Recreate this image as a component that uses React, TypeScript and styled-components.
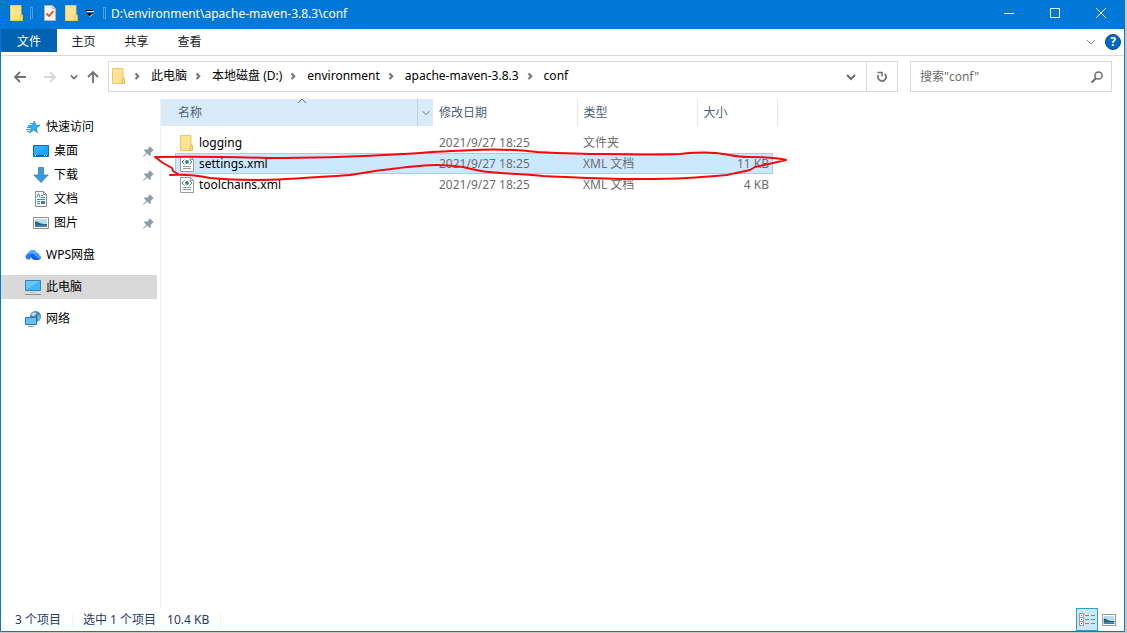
import React from 'react';
import styled, { createGlobalStyle, css } from 'styled-components';

const GlobalStyle = createGlobalStyle`
  *, *::before, *::after { box-sizing: border-box; }
  body { margin: 0; background: #c8c8c8; }
  body, button, input, table {
    font-family: "Noto Sans", "Noto Sans CJK SC", sans-serif;
    font-size: 12px;
    line-height: 20px;
  }
  button { margin: 0; padding: 0; border: 0; background: none; color: inherit; }
  svg { display: block; flex: none; }
`;

const Desktop = styled.div`
  display: flex;
  min-height: 100vh;
  padding: 0 2px 1px 0;
`;

const Window = styled.main`
  flex: 1;
  display: flex;
  flex-direction: column;
  background: #fff;
  border: 1px solid #0078d7;
  border-top: 0;
  color: #000;
`;

const TitleBar = styled.header`
  display: flex;
  align-items: center;
  height: 29px;
  padding: 0 0 3px 8px;
  background: #0078d7;
  color: #fff;
`;

const Separator = styled.span`
  width: 3px;
  height: 12px;
  margin: 0 5px;
  border: 1px solid #4d9fe2;
`;

const QuickButton = styled.button<{ $width: number }>`
  display: flex;
  align-items: center;
  justify-content: center;
  width: ${p => p.$width}px;
  height: 20px;
`;

const Title = styled.h1`
  flex: 1;
  margin: 0;
  padding-top: 2px;
  font-size: 12px;
  font-weight: 400;
`;

const CaptionButton = styled.button`
  display: flex;
  align-items: center;
  justify-content: center;
  width: 46px;
  height: 26px;
`;

const Ribbon = styled.nav`
  display: flex;
  align-items: flex-start;
  height: 27px;
  border-bottom: 1px solid #dadbdc;
`;

const RibbonTab = styled.button<{ $primary?: boolean }>`
  width: ${p => (p.$primary ? 56 : 53)}px;
  height: 23px;
  padding-top: 2px;
  color: #222;
  ${p => p.$primary && css`
    background: #0063b1;
    color: #fff;
  `}
`;

const RibbonEnd = styled.div`
  display: flex;
  align-items: center;
  gap: 9px;
  height: 26px;
  margin-left: auto;
  padding-right: 3px;
`;

const HelpButton = styled.button`
  width: 16px;
  height: 16px;
  border-radius: 50%;
  border: 1px solid #0a4a8c;
  background: #0067c5;
  color: #fff;
  font-weight: 700;
  line-height: 14px;
`;

const NavRow = styled.div`
  display: flex;
  align-items: center;
  height: 43px;
  padding: 0 12px 2px 9px;
`;

const NavButton = styled.button<{ $width: number }>`
  display: flex;
  align-items: center;
  justify-content: center;
  width: ${p => p.$width}px;
  height: 24px;
`;

const AddressBox = styled.div`
  flex: 1;
  display: flex;
  align-items: stretch;
  height: 31px;
  border: 1px solid #d9d9d9;
`;

const Path = styled.ol`
  flex: 1;
  display: flex;
  align-items: center;
  margin: 0;
  padding: 0 0 2px 3px;
  list-style: none;
`;

const Crumb = styled.li`
  display: flex;
  align-items: center;
  white-space: nowrap;
`;

const CrumbArrow = styled.span`
  display: flex;
  justify-content: center;
  width: 25px;
  padding-right: 3px;
`;

const AddressButton = styled.button<{ $divided?: boolean }>`
  display: flex;
  align-items: center;
  justify-content: center;
  width: 31px;
  ${p => p.$divided && css`border-left: 1px solid #d9d9d9;`}
`;

const SearchBox = styled.label`
  display: flex;
  align-items: center;
  width: 202px;
  height: 31px;
  margin-left: 12px;
  padding: 0 7px 0 9px;
  border: 1px solid #d9d9d9;
`;

const SearchInput = styled.input`
  flex: 1;
  min-width: 0;
  padding: 0;
  border: 0;
  outline: 0;
  background: none;
  &::placeholder { color: #6d6d6d; opacity: 1; }
`;

const Body = styled.div`
  flex: 1;
  display: flex;
`;

const Sidebar = styled.aside`
  display: flex;
  flex-direction: column;
  gap: 8px;
  width: 160px;
  padding: 16px 3px 0 0;
  border-right: 1px solid #f0f0f0;
`;

const TreeGroup = styled.ul`
  margin: 0;
  padding: 0;
  list-style: none;
`;

const TreeItem = styled.li<{ $active?: boolean }>`
  background: ${p => (p.$active ? '#d9d9d9' : 'transparent')};
`;

const TreeLink = styled.a<{ $nested?: boolean }>`
  display: flex;
  align-items: center;
  gap: 5px;
  height: 24px;
  padding-left: ${p => (p.$nested ? 32 : 24)}px;
  padding-right: 3px;
  color: #000;
  text-decoration: none;
`;

const TreeLabel = styled.span`
  flex: 1;
`;

const Files = styled.section`
  position: relative;
  flex: 1;
`;

const Table = styled.table`
  width: 616px;
  table-layout: fixed;
  border-collapse: collapse;
  tbody::before {
    content: '';
    display: block;
    height: 6px;
  }
`;

const HeadCell = styled.th<{ $sorted?: boolean }>`
  position: relative;
  height: 27px;
  padding: 0;
  border-right: ${p => (p.$sorted ? 0 : '1px solid #e5e5e5')};
  background: ${p => (p.$sorted ? '#d9ebf9' : '#fff')};
  color: #4c607a;
  font-weight: 400;
`;

const HeadContent = styled.div`
  display: flex;
  height: 27px;
`;

const SortButton = styled.button<{ $indent: number }>`
  flex: 1;
  padding-left: ${p => p.$indent}px;
  text-align: left;
`;

const HeadMenuButton = styled.button`
  display: flex;
  align-items: center;
  justify-content: center;
  width: 16px;
  border-left: 1px solid #b5d3ea;
`;

const SortMark = styled.span`
  position: absolute;
  top: -2px;
  left: 136px;
`;

const FileCell = styled.td<{ $end?: boolean }>`
  height: 21px;
  padding: 0;
  color: #6d6d6d;
  text-align: ${p => (p.$end ? 'right' : 'left')};
`;

type CellPart = 'first' | 'middle' | 'last';

const CellContent = styled.div<{ $part: CellPart; $selected?: boolean }>`
  display: flex;
  align-items: center;
  gap: 5px;
  height: 21px;
  padding-left: 6px;
  border: 1px solid transparent;
  border-width: 1px 0;
  ${p => p.$part === 'first' && css`
    margin-left: 14px;
    padding-left: 4px;
    border-left-width: 1px;
    color: #000;
  `}
  ${p => p.$part === 'last' && css`
    justify-content: flex-end;
    margin-right: 4px;
    padding-right: 3px;
    border-right-width: 1px;
  `}
  ${p => p.$selected && css`
    background: #cce8ff;
    border-color: #99d1ff;
  `}
`;

const Markup = styled.svg`
  position: absolute;
  top: 0;
  left: -11px;
  pointer-events: none;
`;

const StatusBar = styled.footer`
  display: flex;
  align-items: center;
  height: 23px;
  padding-left: 14px;
  color: #1e3c64;
`;

const StatusText = styled.span<{ $divided?: boolean }>`
  padding-right: 11px;
  margin-right: ${p => (p.$divided ? 10 : 0)}px;
  border-right: ${p => (p.$divided ? '1px solid #f2f2f2' : 0)};
  line-height: 12px;
`;

const Views = styled.div`
  display: flex;
  margin-left: auto;
  padding-right: 4px;
`;

const ViewButton = styled.button<{ $on?: boolean }>`
  display: flex;
  align-items: center;
  justify-content: center;
  width: 22px;
  height: 23px;
  ${p => p.$on && css`
    border: 1px solid #26a0da;
    background: #cbe8f6;
  `}
`;

const FolderIcon = () => (
  <svg width="14" height="16" viewBox="0 0 14 16">
    <path d="M.5.500h10.500v9l1.500.8v5.200H.5z" fill="#ffe391" stroke="#ecc962" />
    <path d="M10 15.500v-4l1-1.500 1.500.5v5z" fill="#fcd877" stroke="#e6bf50" />
  </svg>
);

const CheckDocIcon = () => (
  <svg width="12" height="16" viewBox="0 0 12 16">
    <path d="M.5.5h8l3 3v12H.5z" fill="#f6f6f6" stroke="#b9b0aa" />
    <path d="M8.500.5v3h3" fill="none" stroke="#b9b0aa" />
    <path d="M2.500 8.500l2.500 2.500 4.500-5" fill="none" stroke="#e2521b" strokeWidth="1.800" />
  </svg>
);

const CustomizeIcon = () => (
  <svg width="8" height="7" viewBox="0 0 8 7">
    <path d="M0 0h7v1H0z" fill="#000" />
    <path d="M1 1h7v1H1z" fill="#fff" />
    <path d="M1 4h6L4 7z" fill="#fff" />
    <path d="M0 3h7L3.500 6.500z" fill="#000" />
  </svg>
);

type ChevronProps = { dir: 'down' | 'right' | 'up'; size?: number; color?: string; weight?: number };

const Chevron = ({ dir, size = 10, color = '#707070', weight = 1 }: ChevronProps) => {
  const paths = { down: 'M1 3l4 4 4-4', right: 'M3.500 2.500l2.800 2.800-2.800 2.800', up: 'M1 6l4-4 4 4' };
  return (
    <svg width={size} height={size} viewBox="0 0 10 10">
      <path d={paths[dir]} fill="none" stroke={color} strokeWidth={weight} />
    </svg>
  );
};

const Arrow = ({ dir, color }: { dir: 'left' | 'right' | 'up'; color: string }) => {
  const paths = {
    left: 'M13 7H2M7 2L2 7l5 5',
    right: 'M1 7h11M7 2l5 5-5 5',
    up: 'M7 13V2M2 7l5-5 5 5',
  };
  return (
    <svg width="14" height="14" viewBox="0 0 14 14">
      <path d={paths[dir]} fill="none" stroke={color} strokeWidth="1.800" />
    </svg>
  );
};

const RefreshIcon = () => (
  <svg width="12" height="12" viewBox="0 0 12 12">
    <path d="M8.500 2.800a4 4 0 1 1-6 1.200" fill="none" stroke="#707070" strokeWidth="1.700" />
    <path d="M1.500 1.500H6v4" fill="none" stroke="#707070" strokeWidth="1.600" />
  </svg>
);

const SearchIcon = () => (
  <svg width="14" height="14" viewBox="0 0 14 14">
    <circle cx="8.500" cy="5.500" r="3.600" fill="none" stroke="#6a6a6a" strokeWidth="1.500" />
    <path d="M6 8.200L1.500 12.500" stroke="#6a6a6a" strokeWidth="2" />
  </svg>
);

const PinIcon = () => (
  <svg width="11" height="11" viewBox="0 0 11 11">
    <path d="M6.500 0L11 4.500l-1.200.3-2 2 .1 2.400-1.200.9-2.500-2.500L.5 11 0 10.500l3.300-3.800L1 4.400l.9-1.100 2.300.1 2-2z" fill="#909da6" />
  </svg>
);

const StarIcon = () => (
  <svg width="16" height="16" viewBox="0 0 16 16">
    <path d="M9.500 2l1.200 4.200 4.300.2-3.600 2.600.9 4.600-3.600-2.500-4 2.900 1.500-4.600L3 6.600l4.200-.3z" fill="#2fb0f0" stroke="#168ad0" strokeWidth=".8" />
    <path d="M5 4.500h2.500M2 8.500h3.500M1 10.500h4M2 12.500h2.500" stroke="#2b9be0" />
  </svg>
);

const DesktopIcon = () => (
  <svg width="16" height="16" viewBox="0 0 16 16">
    <path d="M.5 2.500h15v11H.5z" fill="#1aa4ff" stroke="#0f6cb5" />
    <path d="M1 13V3h14z" fill="#45b6ff" opacity=".5" />
    <path d="M1 12.500h14" stroke="#0a5c9c" />
    <path d="M2 12.500h1M11 12.500h1M13 12.500h1" stroke="#fff" />
  </svg>
);

const DownloadIcon = () => (
  <svg width="16" height="16" viewBox="0 0 16 16">
    <path d="M5.500.500h5v7.500h4.700L8 15.500.8 8h4.700z" fill="#3d97dd" stroke="#2c7fc6" strokeWidth=".8" />
  </svg>
);

const DocumentIcon = () => (
  <svg width="16" height="16" viewBox="0 0 16 16">
    <path d="M2.500.500h8l3 3v12h-11z" fill="#fff" stroke="#8d8d8d" />
    <path d="M10.500.500v3h3" fill="none" stroke="#8d8d8d" />
    <path d="M4 6.500l1.500-4 1.500 4M8 4.500h2M8 6.500h4M4 8.500h8M4 10.500h3M4 12.500h3" fill="none" stroke="#2f8bd4" />
    <path d="M8 10h4v3H8z" fill="#2f7fb8" />
  </svg>
);

const PictureIcon = ({ width = 16 }: { width?: number }) => (
  <svg width={width} height="16" viewBox="0 0 16 16" preserveAspectRatio="none">
    <path d="M.5 2.500h15v11H.5z" fill="#fff" stroke="#8f8f8f" />
    <path d="M2 4h12v8H2z" fill="#b4dcf5" />
    <path d="M2 6.500c3 0 4 1.500 6 2s4 .5 6 .5v1H2z" fill="#2f6459" />
    <path d="M2 9.800h12V12H2z" fill="#3f7fc0" />
  </svg>
);

const CloudIcon = () => (
  <svg width="16" height="16" viewBox="0 0 16 16">
    <path d="M3 12.500a2.700 2.700 0 0 1-.8-5.200C4 4 6 3 8 3s3 1 3.500 2.500L7 8l-2 4.500z" fill="#2b7cf6" />
    <path d="M2 7.300C3.500 4 6 3 8 3s3 1 3.500 2.500L9 8C7 6 4.500 6.500 2 7.300z" fill="#55afff" />
    <path d="M6 7c3-1.500 5 2 7 3.500 1 .6 2 .8 2.800.8C15.500 12.500 14 13 13 13H9.500C7 12.500 5 10 6 7z" fill="#1560e8" />
    <path d="M9 7c2-2.200 5.500-1 5.500 1.500 1.500.5 2 2 1.300 3C12.500 12 11.500 8.500 9 7z" fill="#3f97ff" />
  </svg>
);

const ComputerIcon = () => (
  <svg width="16" height="16" viewBox="0 0 16 16">
    <path d="M.5 1.500h15v10H.5z" fill="#42b4f5" stroke="#3481b5" />
    <path d="M1 11V2h14z" fill="#85d3ff" opacity=".6" />
    <path d="M5 13.500h6" stroke="#b4c3cd" />
    <path d="M0 15.500h16" stroke="#7d93a3" />
  </svg>
);

const NetworkIcon = () => (
  <svg width="16" height="16" viewBox="0 0 16 16">
    <circle cx="10.500" cy="5.500" r="5.500" fill="#4a86ab" />
    <path d="M6 4c1-3 4-3.500 5-2s-2 2-2 3.500z" fill="#bfdcea" />
    <path d="M12.500 4l3 .5-.5 4-2 1.500z" fill="#79b4d4" />
    <path d="M.5 6.500h11v7H.5z" fill="#62c2f8" stroke="#2579b8" />
    <path d="M3 15.500h6" stroke="#8ba1b0" />
  </svg>
);

const XmlIcon = () => (
  <svg width="14" height="16" viewBox="0 0 14 16">
    <path d="M.5.500h10l3 3v12H.5z" fill="#fff" stroke="#9a9a9a" />
    <path d="M10.500.500v3h3" fill="none" stroke="#9a9a9a" />
    <path d="M4.500 3.500L2 6l2.500 2.500M9.500 3.500L12 6 9.500 8.500" fill="none" stroke="#5a6680" strokeWidth=".9" />
    <circle cx="7" cy="6" r="2" fill="#2c9a86" />
    <path d="M6 5h1v1H6z" fill="#1d5ea8" />
    <path d="M3 10.500h8M3 12.500h8" stroke="#9a9a9a" />
  </svg>
);

const DetailsIcon = () => (
  <svg width="16" height="13" viewBox="0 0 16 13">
    <path d="M.5.500h4v4h-4zM.5 4.500h4v4h-4zM.5 8.500h4v4h-4z" fill="#fff" stroke="#999" />
    <path d="M2 2h1v1H2z" fill="#777" />
    <path d="M2 6h1v1H2z" fill="#2c86d2" />
    <path d="M2 10h1v1H2z" fill="#d22" />
    <path d="M6 2.500h4M12 2.500h4M6 6.500h4M12 6.500h4M6 10.500h4M12 10.500h4" stroke="#7d868c" />
  </svg>
);

const crumbs = ['此电脑', '本地磁盘 (D:)', 'environment', 'apache-maven-3.8.3', 'conf'];

const pinned = [
  { label: '桌面', Icon: DesktopIcon },
  { label: '下载', Icon: DownloadIcon },
  { label: '文档', Icon: DocumentIcon },
  { label: '图片', Icon: PictureIcon },
];

const places = [
  { label: 'WPS网盘', Icon: CloudIcon },
  { label: '此电脑', Icon: ComputerIcon, active: true },
  { label: '网络', Icon: NetworkIcon },
];

const files = [
  { name: 'logging', date: '2021/9/27 18:25', type: '文件夹', size: '', Icon: FolderIcon },
  { name: 'settings.xml', date: '2021/9/27 18:25', type: 'XML 文档', size: '11 KB', Icon: XmlIcon, selected: true },
  { name: 'toolchains.xml', date: '2021/9/27 18:25', type: 'XML 文档', size: '4 KB', Icon: XmlIcon },
];

export default function App() {
  return (
    <>
      <GlobalStyle />
      <Desktop>
        <Window>
          <TitleBar>
            <QuickButton $width={16} aria-label="conf"><FolderIcon /></QuickButton>
            <Separator />
            <QuickButton $width={24} aria-label="属性"><CheckDocIcon /></QuickButton>
            <QuickButton $width={20} aria-label="新建文件夹"><FolderIcon /></QuickButton>
            <QuickButton $width={16} aria-label="自定义快速访问工具栏"><CustomizeIcon /></QuickButton>
            <Separator />
            <Title>D:\environment\apache-maven-3.8.3\conf</Title>
            <CaptionButton aria-label="最小化">
              <svg width="10" height="10"><path d="M0 5.500h10" stroke="#fff" /></svg>
            </CaptionButton>
            <CaptionButton aria-label="最大化">
              <svg width="10" height="10"><path d="M.5.500h9v9h-9z" fill="none" stroke="#fff" /></svg>
            </CaptionButton>
            <CaptionButton aria-label="关闭">
              <svg width="10" height="10"><path d="M0 0l10 10M10 0L0 10" stroke="#fff" /></svg>
            </CaptionButton>
          </TitleBar>

          <Ribbon>
            <RibbonTab $primary>文件</RibbonTab>
            <RibbonTab>主页</RibbonTab>
            <RibbonTab>共享</RibbonTab>
            <RibbonTab>查看</RibbonTab>
            <RibbonEnd>
              <button aria-label="展开功能区"><Chevron dir="down" color="#8a8a8a" /></button>
              <HelpButton aria-label="帮助">?</HelpButton>
            </RibbonEnd>
          </Ribbon>

          <NavRow>
            <NavButton $width={20} aria-label="后退"><Arrow dir="left" color="#707070" /></NavButton>
            <NavButton $width={40} aria-label="前进"><Arrow dir="right" color="#d8d8d8" /></NavButton>
            <NavButton $width={8} aria-label="最近浏览的位置"><Chevron dir="down" size={8} weight={2} /></NavButton>
            <NavButton $width={30} aria-label="上移"><Arrow dir="up" color="#707070" /></NavButton>
            <AddressBox>
              <Path>
                <li><FolderIcon /></li>
                {crumbs.map(label => (
                  <Crumb key={label}>
                    <CrumbArrow><Chevron dir="right" weight={2} /></CrumbArrow>
                    {label}
                  </Crumb>
                ))}
              </Path>
              <AddressButton aria-label="以前的位置"><Chevron dir="down" weight={2} /></AddressButton>
              <AddressButton $divided aria-label="刷新"><RefreshIcon /></AddressButton>
            </AddressBox>
            <SearchBox>
              <SearchInput type="text" placeholder={'搜索"conf"'} aria-label="搜索" />
              <SearchIcon />
            </SearchBox>
          </NavRow>

          <Body>
            <Sidebar>
              <TreeGroup>
                <TreeItem>
                  <TreeLink href="#quick"><StarIcon /><TreeLabel>快速访问</TreeLabel></TreeLink>
                </TreeItem>
                {pinned.map(({ label, Icon }) => (
                  <TreeItem key={label}>
                    <TreeLink $nested href="#pinned"><Icon /><TreeLabel>{label}</TreeLabel><PinIcon /></TreeLink>
                  </TreeItem>
                ))}
              </TreeGroup>
              {places.map(({ label, Icon, active }) => (
                <TreeGroup key={label}>
                  <TreeItem $active={active}>
                    <TreeLink href="#place"><Icon /><TreeLabel>{label}</TreeLabel></TreeLink>
                  </TreeItem>
                </TreeGroup>
              ))}
            </Sidebar>

            <Files>
              <Table>
                <colgroup>
                  <col width="272" />
                  <col width="144" />
                  <col width="120" />
                  <col width="80" />
                </colgroup>
                <thead>
                  <tr>
                    <HeadCell $sorted>
                      <SortMark><Chevron dir="up" color="#5a6a7a" /></SortMark>
                      <HeadContent>
                        <SortButton $indent={17}>名称</SortButton>
                        <HeadMenuButton aria-label="筛选"><Chevron dir="down" size={8} color="#4c607a" /></HeadMenuButton>
                      </HeadContent>
                    </HeadCell>
                    {['修改日期', '类型', '大小'].map(label => (
                      <HeadCell key={label}>
                        <HeadContent><SortButton $indent={6}>{label}</SortButton></HeadContent>
                      </HeadCell>
                    ))}
                  </tr>
                </thead>
                <tbody>
                  {files.map(({ name, date, type, size, Icon, selected }) => (
                    <tr key={name}>
                      <FileCell><CellContent $part="first" $selected={selected}><Icon />{name}</CellContent></FileCell>
                      <FileCell><CellContent $part="middle" $selected={selected}>{date}</CellContent></FileCell>
                      <FileCell><CellContent $part="middle" $selected={selected}>{type}</CellContent></FileCell>
                      <FileCell $end><CellContent $part="last" $selected={selected}>{size}</CellContent></FileCell>
                    </tr>
                  ))}
                </tbody>
              </Table>
              <Markup width="650" height="100" viewBox="150 99 650 100" aria-hidden="true">
                <path
                  d="M170 175C185 174 195 175 210 178C230 180 243 180 257 180C285 180 320 177 350 175C365 173 373 171 383 170C400 168 420 165 437 165C447 165 455 166 463 167C475 170 483 172 490 172C508 174 526 174 543 176C570 177 600 179 637 179C655 179 670 179 687 178C703 177 715 176 727 175C735 173 742 172 750 170L755 167L786 160C775 157 760 157 748 157C735 157 728 154 715 153C703 152 690 153 680 154C655 155 625 154 603 154C580 154 558 153 537 152C520 150 500 149 475 150C440 151 410 154 383 155C350 157 300 158 267 158C235 157 200 156 155 157L163 163L172 168L173 171L178 174"
                  fill="none"
                  stroke="#f80808"
                  strokeWidth="2"
                  strokeLinejoin="round"
                  strokeLinecap="round"
                />
              </Markup>
            </Files>
          </Body>

          <StatusBar>
            <StatusText $divided>3 个项目</StatusText>
            <StatusText>选中 1 个项目</StatusText>
            <StatusText $divided>10.4 KB</StatusText>
            <Views>
              <ViewButton $on aria-label="详细信息"><DetailsIcon /></ViewButton>
              <ViewButton aria-label="大缩略图"><PictureIcon width={14} /></ViewButton>
            </Views>
          </StatusBar>
        </Window>
      </Desktop>
    </>
  );
}
